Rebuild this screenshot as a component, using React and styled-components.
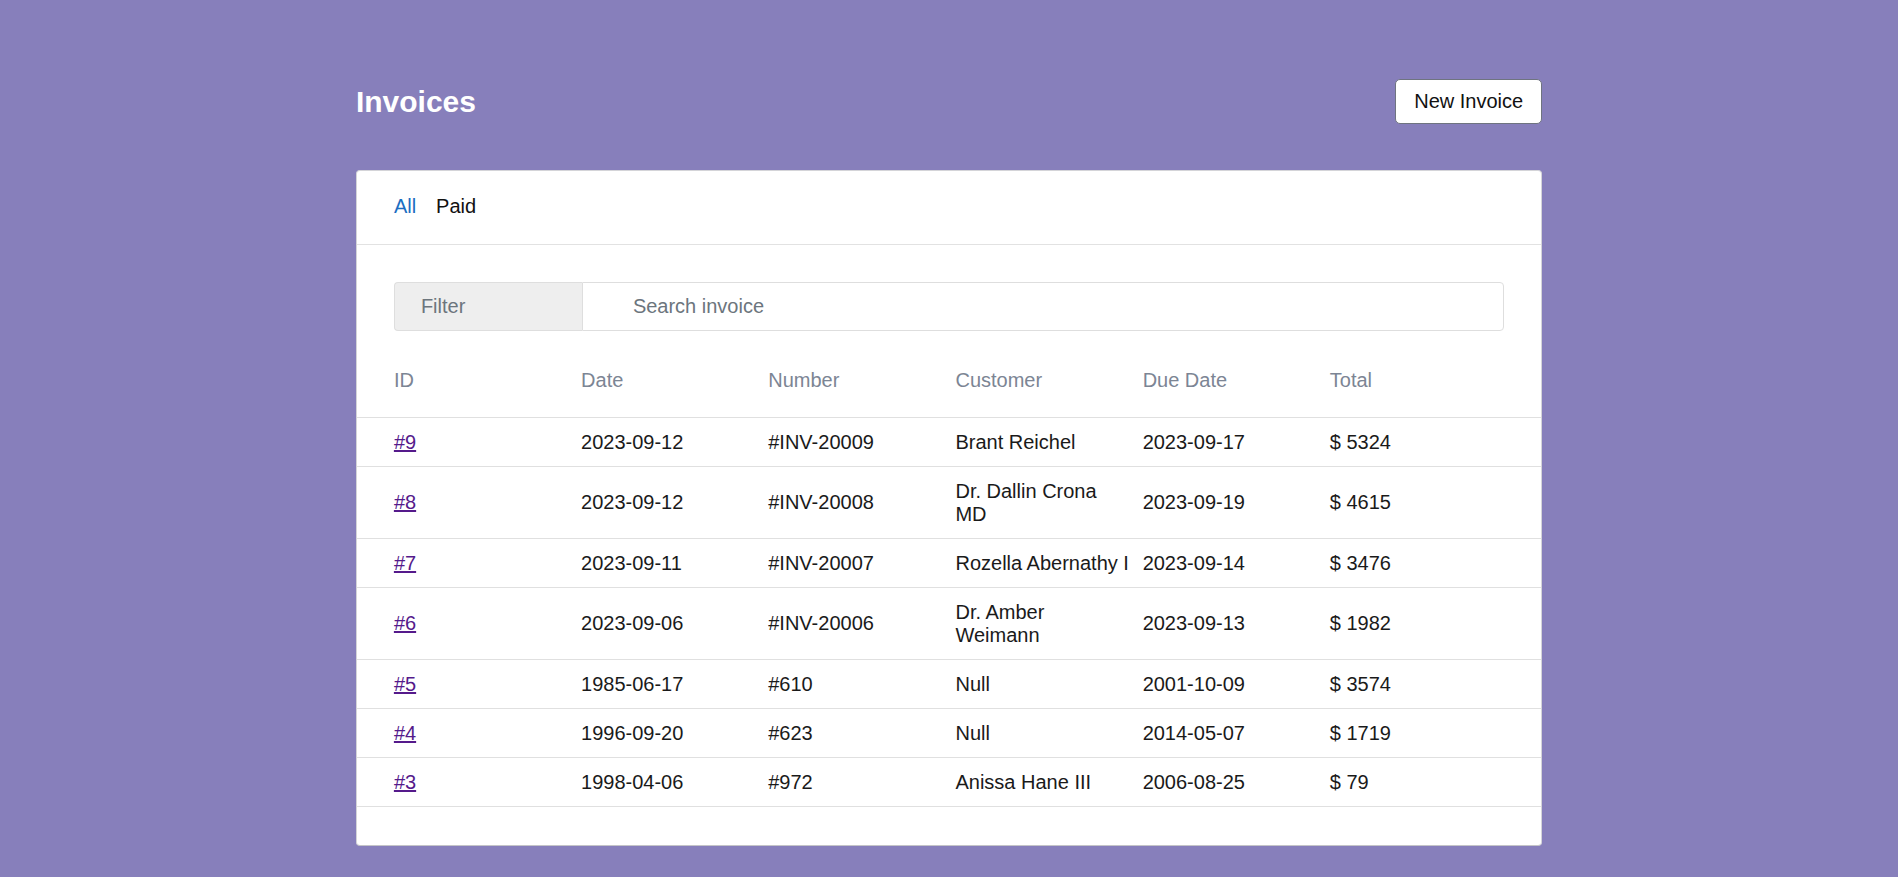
import React from "react";
import styled, { createGlobalStyle } from "styled-components";

const invoices = [
  { id: 9, date: "2023-09-12", number: "#INV-20009", customer: "Brant Reichel", due: "2023-09-17", total: 5324 },
  { id: 8, date: "2023-09-12", number: "#INV-20008", customer: "Dr. Dallin Crona\nMD", due: "2023-09-19", total: 4615 },
  { id: 7, date: "2023-09-11", number: "#INV-20007", customer: "Rozella Abernathy I", due: "2023-09-14", total: 3476 },
  { id: 6, date: "2023-09-06", number: "#INV-20006", customer: "Dr. Amber\nWeimann", due: "2023-09-13", total: 1982 },
  { id: 5, date: "1985-06-17", number: "#610", customer: "Null", due: "2001-10-09", total: 3574 },
  { id: 4, date: "1996-09-20", number: "#623", customer: "Null", due: "2014-05-07", total: 1719 },
  { id: 3, date: "1998-04-06", number: "#972", customer: "Anissa Hane III", due: "2006-08-25", total: 79 },
];

const columns = ["ID", "Date", "Number", "Customer", "Due Date", "Total"];

export default function App() {
  return (
    <>
      <GlobalStyle />
      <Page>
        <Header>
          <Title>Invoices</Title>
          <Button type="button">New Invoice</Button>
        </Header>

        <Card>
          <Tabs>
            <Tab $active>All</Tab>
            <Tab>Paid</Tab>
          </Tabs>

          <FilterGroup>
            <Addon>Filter</Addon>
            <SearchInput placeholder="Search invoice" />
          </FilterGroup>

          <HeadRow>
            {columns.map((c) => (
              <HeadCell key={c}>{c}</HeadCell>
            ))}
          </HeadRow>

          {invoices.map((inv) => (
            <Row key={inv.id}>
              <Cell>
                <IdLink href={`#invoice-${inv.id}`}>#{inv.id}</IdLink>
              </Cell>
              <Cell>{inv.date}</Cell>
              <Cell>{inv.number}</Cell>
              <Cell>{inv.customer}</Cell>
              <Cell>{inv.due}</Cell>
              <Cell>$ {inv.total}</Cell>
            </Row>
          ))}
        </Card>
      </Page>
    </>
  );
}

const GlobalStyle = createGlobalStyle`
  html, body {
    margin: 0;
    min-height: 100%;
    background: #877fbb;
  }
  body {
    font-family: "Liberation Sans", Arial, sans-serif;
    font-size: 20px;
    color: #1a1a1a;
  }
  * { box-sizing: border-box; }
`;

const Page = styled.div`
  width: 62.5%;
  margin: 0 auto;
  padding: 79px 0 34px;
`;

const Header = styled.div`
  display: flex;
  align-items: center;
  justify-content: space-between;
  margin-bottom: 46px;
`;

const Title = styled.h1`
  margin: 0;
  font-size: 30px;
  font-weight: 700;
  color: #fff;
`;

const Button = styled.button`
  font-family: inherit;
  font-size: 20px;
  line-height: 23px;
  color: #111;
  background: #fff;
  border: 1px solid #6f7480;
  border-radius: 5px;
  padding: 10px 18px;
  cursor: pointer;
`;

const Card = styled.div`
  background: #fff;
  border: 1px solid #d4d4d8;
  border-bottom-color: #c4c4c8;
  border-radius: 4px;
  padding-bottom: 38px;
`;

const Tabs = styled.div`
  display: flex;
  gap: 20px;
  padding: 24px 37px 26px;
  border-bottom: 1px solid #e2e2e2;
  line-height: 23px;
`;

const Tab = styled.span`
  color: ${(p) => (p.$active ? "#1b6ec2" : "#111")};
  cursor: pointer;
`;

const FilterGroup = styled.div`
  display: flex;
  height: 49px;
  margin: 37px 37px 26px;
`;

const Addon = styled.div`
  width: 188px;
  display: flex;
  align-items: center;
  padding-left: 26px;
  background: #eeeeee;
  color: #6c757d;
  border: 1px solid #dedede;
  border-right: none;
  border-radius: 4px 0 0 4px;
`;

const SearchInput = styled.input`
  flex: 1;
  font-family: inherit;
  font-size: 20px;
  padding: 0 0 0 50px;
  border: 1px solid #dedede;
  border-radius: 0 4px 4px 0;
  outline: none;
  color: #1a1a1a;
  &::placeholder {
    color: #6c757d;
  }
`;

const grid = `
  display: grid;
  grid-template-columns: repeat(5, 187.2px) 1fr;
  align-items: center;
  line-height: 23px;
  padding-left: 37px;
  padding-right: 37px;
  border-bottom: 1px solid #e0e0e0;
`;

const HeadRow = styled.div`
  ${grid}
  padding-top: 12px;
  padding-bottom: 25px;
`;

const HeadCell = styled.div`
  color: #7c8594;
`;

const Row = styled.div`
  ${grid}
  padding-top: 12.5px;
  padding-bottom: 12.5px;
`;

const Cell = styled.div`
  white-space: pre-line;
  padding-right: 8px;
`;

const IdLink = styled.a`
  color: #551a8b;
  text-decoration: underline;
`;
